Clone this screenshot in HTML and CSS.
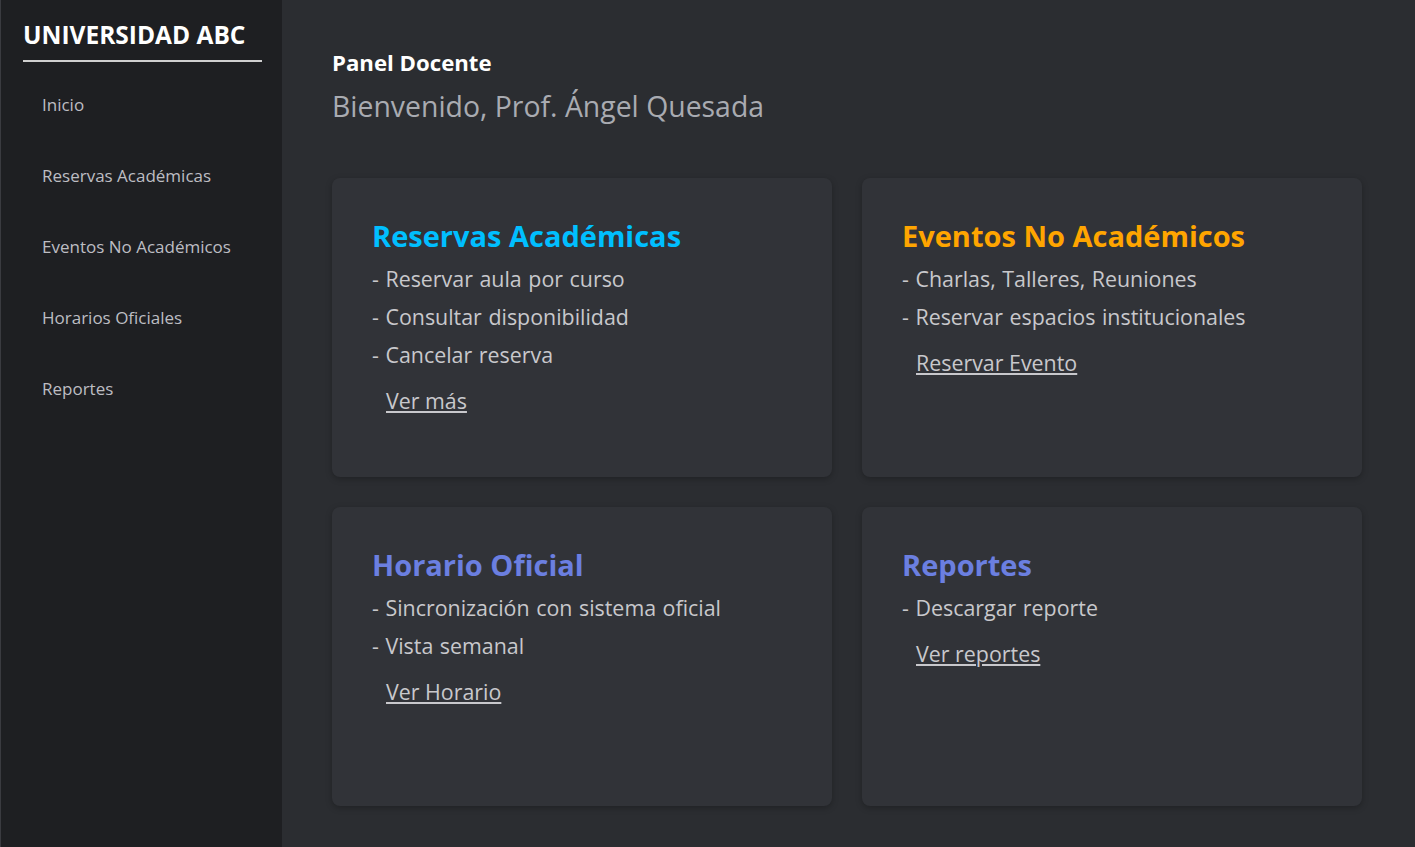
FILE: index.html
```html
<!DOCTYPE html>
<html lang="es">
<head>
<meta charset="utf-8">
<title>Panel Docente</title>
<link rel="stylesheet" href="styles.css">
</head>
<body>
<div class="layout">
  <aside class="sidebar">
    <h2 class="brand">UNIVERSIDAD ABC</h2>
    <nav class="nav">
      <a class="nav-item" href="#">Inicio</a>
      <a class="nav-item" href="#">Reservas Académicas</a>
      <a class="nav-item" href="#">Eventos No Académicos</a>
      <a class="nav-item" href="#">Horarios Oficiales</a>
      <a class="nav-item" href="#">Reportes</a>
    </nav>
  </aside>
  <main class="main">
    <h1 class="page-title">Panel Docente</h1>
    <p class="welcome">Bienvenido, Prof. Ángel Quesada</p>
    <div class="grid">
      <section class="card">
        <h3 class="card-title blue">Reservas Académicas</h3>
        <p class="item">- Reservar aula por curso</p>
        <p class="item">- Consultar disponibilidad</p>
        <p class="item">- Cancelar reserva</p>
        <a class="card-link" href="#">Ver más</a>
      </section>
      <section class="card">
        <h3 class="card-title orange">Eventos No Académicos</h3>
        <p class="item">- Charlas, Talleres, Reuniones</p>
        <p class="item">- Reservar espacios institucionales</p>
        <a class="card-link" href="#">Reservar Evento</a>
      </section>
      <section class="card">
        <h3 class="card-title indigo">Horario Oficial</h3>
        <p class="item">- Sincronización con sistema oficial</p>
        <p class="item">- Vista semanal</p>
        <a class="card-link" href="#">Ver Horario</a>
      </section>
      <section class="card">
        <h3 class="card-title indigo">Reportes</h3>
        <p class="item">- Descargar reporte</p>
        <a class="card-link" href="#">Ver reportes</a>
      </section>
    </div>
  </main>
</div>
</body>
</html>
```

FILE: styles.css
```css
* { box-sizing: border-box; }
html, body {
  margin: 0;
  height: 100%;
}
body {
  font-family: "Open Sans", "Noto Sans", sans-serif;
  background: #2b2d31;
  color: #c8c8cc;
}
.layout {
  display: flex;
  height: 847px;
}
.sidebar {
  width: 282px;
  flex: none;
  background: #1e1f22;
  padding: 20px 20px 0 22px;
  border-left: 1px solid #3a3b40;
}
.brand {
  margin: 0;
  font-size: 24.5px;
  font-weight: 700;
  color: #ffffff;
  line-height: 30px;
  padding-bottom: 10px;
  border-bottom: 2px solid #cfcfcf;
}
.nav {
  display: flex;
  flex-direction: column;
  padding-top: 32px;
}
.nav-item {
  display: block;
  color: #bdbdc2;
  text-decoration: none;
  font-size: 17px;
  line-height: 22px;
  padding-left: 19px;
  height: 71px;
}
.main {
  flex: 1;
  padding: 49px 0 0 50px;
}
.page-title {
  margin: 0;
  font-size: 22.2px;
  font-weight: 700;
  color: #ffffff;
  line-height: 28px;
}
.welcome {
  margin: 12px 0 0;
  font-size: 28.4px;
  line-height: 34px;
  color: #a9abb1;
}
.grid {
  display: grid;
  grid-template-columns: 500px 500px;
  grid-auto-rows: 299px;
  gap: 30px 30px;
  margin-top: 55px;
}
.card {
  background: #313338;
  border-radius: 8px;
  padding: 39px 40px;
  box-shadow: 0 2px 6px rgba(0,0,0,0.25);
}
.card-title {
  margin: 0 0 5px;
  font-size: 29px;
  font-weight: 700;
  line-height: 38px;
}
.blue { color: #00bfff; }
.orange { color: #ffa500; }
.indigo { color: #6b7fe0; }
.item {
  margin: 0;
  font-size: 21.4px;
  line-height: 38px;
  color: #c8c8cc;
  word-spacing: 1px;
}
.card-link {
  display: inline-block;
  margin: 12px 0 0 14px;
  font-size: 21.4px;
  line-height: 30px;
  color: #c8c8cc;
}
```
